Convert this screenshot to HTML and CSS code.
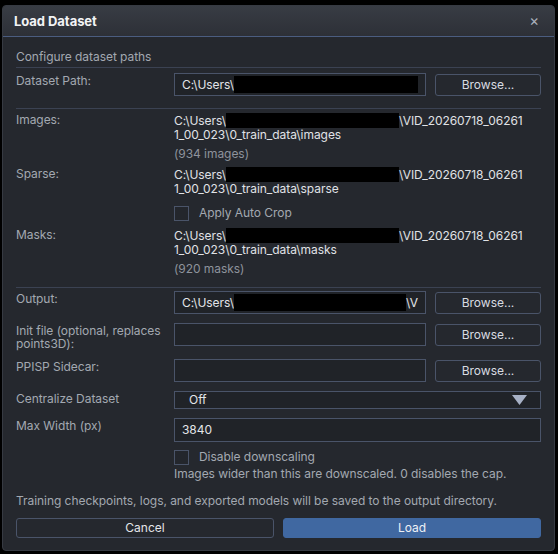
FILE: index.html
```html
<!DOCTYPE html>
<html lang="en">
<head>
    <meta charset="UTF-8">
    <meta name="viewport" content="width=device-width, initial-scale=1.0">
    <title>Load Dataset</title>
    <link rel="stylesheet" href="styles.css">
</head>
<body>
    <div class="window">
        <!-- Title bar -->
        <div class="titlebar">
            <span class="title">Load Dataset</span>
            <span class="close">&times;</span>
        </div>

        <div class="content">
            <p class="section">Configure dataset paths</p>
            <div class="divider first"></div>

            <div class="row">
                <label class="label">Dataset Path:</label>
                <div class="field">C:\Users\<span class="redact w-dataset"></span></div>
                <button class="btn-browse">Browse...</button>
            </div>

            <div class="divider"></div>

            <!-- Detected folders -->
            <div class="info">
                <label class="label">Images:</label>
                <div class="paths">
                    <div class="path">C:\Users\<span class="redact w-path"></span>\VID_20260718_06261</div>
                    <div class="path">1_00_023\0_train_data\images</div>
                    <div class="count">(934 images)</div>
                </div>
            </div>

            <div class="info sparse">
                <label class="label">Sparse:</label>
                <div class="paths">
                    <div class="path">C:\Users\<span class="redact w-path"></span>\VID_20260718_06261</div>
                    <div class="path">1_00_023\0_train_data\sparse</div>
                    <div class="check">
                        <span class="box"></span>
                        <span>Apply Auto Crop</span>
                    </div>
                </div>
            </div>

            <div class="info masks">
                <label class="label">Masks:</label>
                <div class="paths">
                    <div class="path">C:\Users\<span class="redact w-path"></span>\VID_20260718_06261</div>
                    <div class="path">1_00_023\0_train_data\masks</div>
                    <div class="count">(920 masks)</div>
                </div>
            </div>

            <div class="divider lower"></div>

            <div class="row">
                <label class="label">Output:</label>
                <div class="field">C:\Users\<span class="redact w-output"></span>\V</div>
                <button class="btn-browse">Browse...</button>
            </div>

            <div class="row spaced">
                <label class="label">Init file (optional, replaces points3D):</label>
                <div class="field"></div>
                <button class="btn-browse">Browse...</button>
            </div>

            <div class="row spaced">
                <label class="label">PPISP Sidecar:</label>
                <div class="field"></div>
                <button class="btn-browse">Browse...</button>
            </div>

            <div class="row spaced">
                <label class="label">Centralize Dataset</label>
                <div class="combo">
                    <span>Off</span>
                    <svg class="arrow" width="15" height="10" viewBox="0 0 15 10">
                        <polygon points="0,0 15,0 7.5,10" fill="#a7b1c6"/>
                    </svg>
                </div>
            </div>

            <div class="row spaced">
                <label class="label">Max Width (px)</label>
                <div class="field number">3840</div>
            </div>

            <div class="option">
                <div class="check">
                    <span class="box"></span>
                    <span>Disable downscaling</span>
                </div>
                <p class="hint">Images wider than this are downscaled. 0 disables the cap.</p>
            </div>

            <p class="note">Training checkpoints, logs, and exported models will be saved to the output directory.</p>

            <div class="actions">
                <button class="btn-cancel">Cancel</button>
                <button class="btn-load">Load</button>
            </div>
        </div>
    </div>
</body>
</html>
```

FILE: styles.css
```css
/* Basic Reset */
* {
    margin: 0;
    padding: 0;
    box-sizing: border-box;
}

body {
    font-family: Inter, "Noto Sans", sans-serif;
    font-size: 12px;
    line-height: 14px;
    letter-spacing: -0.05px;
    background-color: #000;
    color: #dfe1e5;
    width: 558px;
    height: 554px;
    overflow: hidden;
}

.window {
    margin: 5px 3px 0 2px;
    height: 546px;
    background-color: #25282e;
    border: 1px solid #363a42;
    border-radius: 4px;
    overflow: hidden;
}

.titlebar {
    height: 31px;
    display: flex;
    align-items: center;
    justify-content: space-between;
    padding: 0 15px 0 11px;
    background: linear-gradient(#383c44, #2d3037);
    border-bottom: 1px solid #4b5d80;
}

.title {
    font-size: 13px;
    font-weight: 700;
    color: #f2f3f5;
}

.close {
    font-size: 15px;
    color: #aab0bc;
}

.content {
    padding: 13px 13px 0 13px;
}

.section {
    color: #a3a8b1;
}

.label {
    width: 158px;
    flex-shrink: 0;
    color: #a3a8b1;
    padding-right: 8px;
}

.divider {
    height: 1px;
    background-color: #3b4252;
    margin: 3px 0 5px;
}

.row .label {
    line-height: 13px;
    padding-top: 1px;
}

.divider.lower {
    margin: 11px 0 3px;
}

/* Input rows */
.row {
    display: flex;
    align-items: flex-start;
}

.row + .divider {
    margin: 12px 0 4px;
}

.row.spaced {
    margin-top: 9px;
}

.field {
    flex: 1;
    height: 23px;
    display: flex;
    align-items: center;
    padding: 0 7px;
    background-color: #202328;
    border: 1px solid #4a5469;
    color: #e3e5e9;
    white-space: nowrap;
    overflow: hidden;
}

.field.number {
    height: 24px;
}

.redact {
    display: inline-block;
    height: 17px;
    background-color: #000;
}

.w-dataset {
    width: 187px;
}

.w-output {
    width: 175px;
}

.btn-browse {
    width: 106px;
    height: 22px;
    margin: 1px 0 0 9px;
    font: inherit;
    color: #d9dce1;
    background-color: #25282e;
    border: 1px solid #4a5469;
    border-radius: 3px;
}

.combo {
    flex: 1;
    height: 18px;
    display: flex;
    align-items: center;
    justify-content: space-between;
    padding: 0 14px 0 14px;
    background-color: #202328;
    border: 1px solid #4a5469;
    color: #e3e5e9;
}

.arrow {
    margin-right: -1px;
}

/* Detected folder blocks */
.info {
    display: flex;
    align-items: flex-start;
}

.info.sparse {
    margin-top: 6px;
}

.info.masks {
    margin-top: 7px;
}

.path {
    color: #e0e2e6;
    white-space: nowrap;
}

.path .redact {
    height: 15px;
    vertical-align: -3px;
}

.w-path {
    width: 173px;
}

.count {
    margin-top: 5px;
    color: #8e939c;
}

.check {
    display: flex;
    align-items: center;
    gap: 10px;
    color: #a3a8b1;
}

.info .check {
    margin-top: 9px;
    height: 16px;
}

.box {
    width: 15px;
    height: 15px;
    border: 1px solid #4a5469;
    background-color: #23262c;
}

.option {
    margin: 8px 0 0 158px;
}

.option .check {
    height: 14px;
}

.hint {
    margin-top: 3px;
    color: #a3a8b1;
}

.note {
    margin-top: 13px;
    color: #a3a8b1;
}

.actions {
    display: flex;
    gap: 9px;
    margin-top: 10px;
}

.actions button {
    flex: 1;
    height: 20px;
    font: inherit;
    border-radius: 3px;
}

.btn-cancel {
    color: #e3e5e9;
    background-color: #25282e;
    border: 1px solid #4a5469;
}

.btn-load {
    color: #eef1f6;
    background-color: #4068a1;
    border: 1px solid #4068a1;
}
```
